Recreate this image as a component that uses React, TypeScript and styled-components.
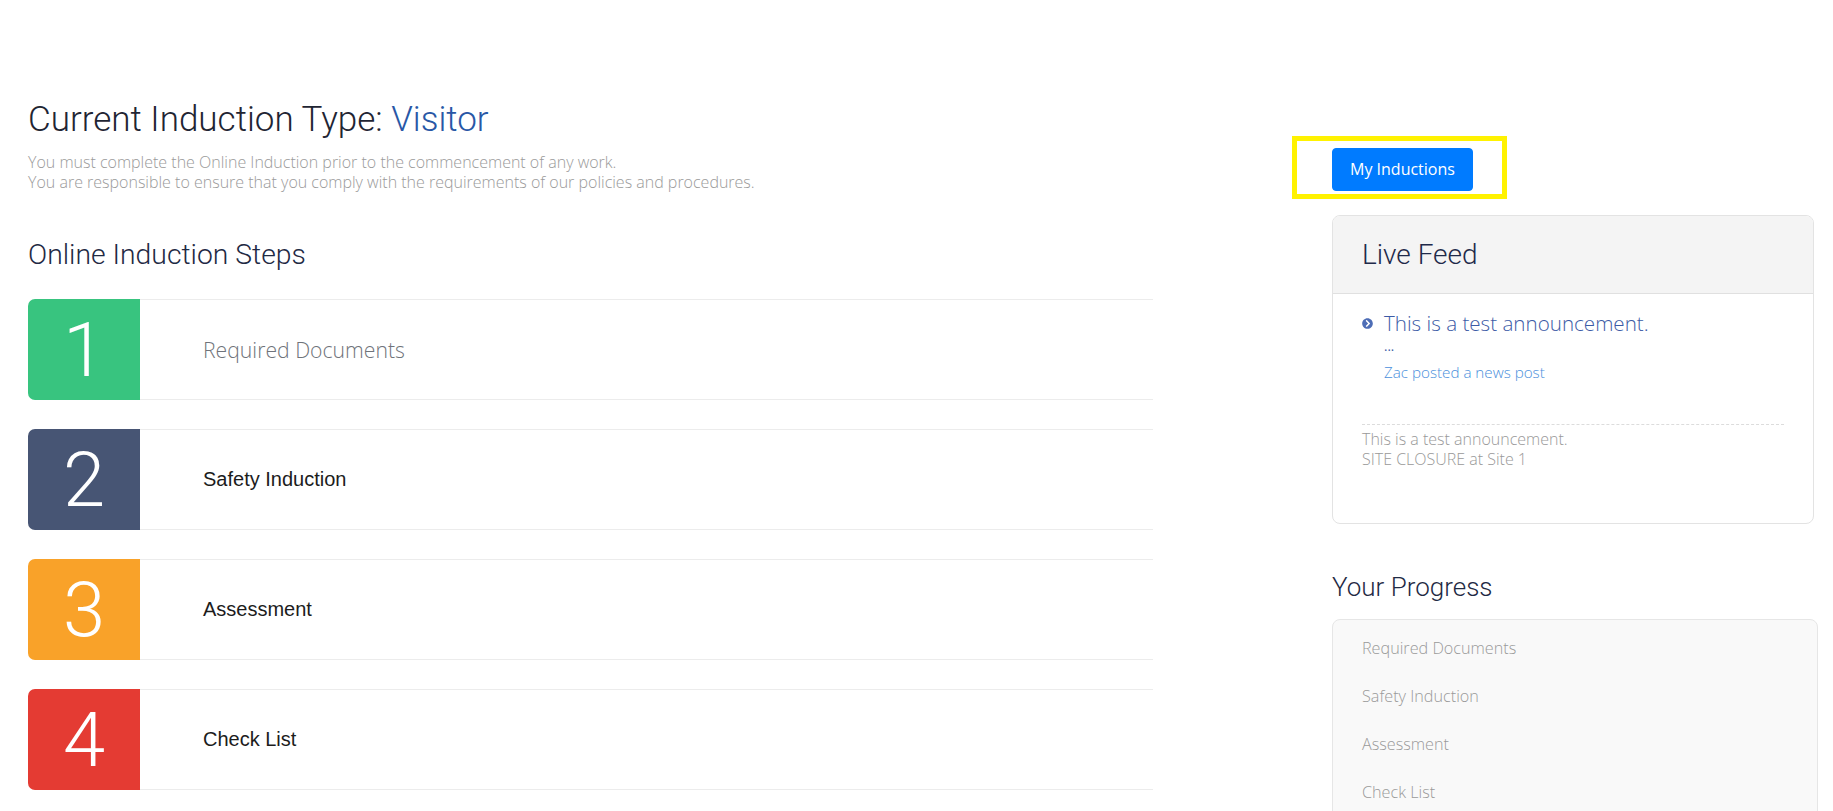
import React from 'react';
import styled, { createGlobalStyle } from 'styled-components';
import { FaChevronCircleRight } from 'react-icons/fa';

const steps = [
  { n: 1, label: 'Required Documents', color: '#38c47f', done: true },
  { n: 2, label: 'Safety Induction', color: '#475574', done: false },
  { n: 3, label: 'Assessment', color: '#f9a229', done: false },
  { n: 4, label: 'Check List', color: '#e43b33', done: false },
];

const InductionPage = () => {
  return (
    <>
      <GlobalStyle />
      <Page>
        <Main>
          <Title>
            Current Induction Type: <Accent>Visitor</Accent>
          </Title>
          <Intro>
            You must complete the Online Induction prior to the commencement of
            any work.
            <br />
            You are responsible to ensure that you comply with the requirements
            of our policies and procedures.
          </Intro>
          <SectionTitle>Online Induction Steps</SectionTitle>
          <StepList>
            {steps.map((s) => (
              <StepRow key={s.n}>
                <StepNumber $color={s.color}>{s.n}</StepNumber>
                <StepLabel $done={s.done}>{s.label}</StepLabel>
              </StepRow>
            ))}
          </StepList>
        </Main>

        <Aside>
          <Highlight>
            <PrimaryButton>My Inductions</PrimaryButton>
          </Highlight>

          <Panel>
            <PanelHeader>Live Feed</PanelHeader>
            <FeedBody>
              <FeedItem>
                <FeedIcon>
                  <FaChevronCircleRight />
                </FeedIcon>
                <div>
                  <FeedTitle>This is a test announcement.</FeedTitle>
                  <FeedDots>...</FeedDots>
                  <FeedMeta>Zac posted a news post</FeedMeta>
                </div>
              </FeedItem>
              <FeedText>
                This is a test announcement.
                <br />
                SITE CLOSURE at Site 1
              </FeedText>
            </FeedBody>
          </Panel>

          <ProgressTitle>Your Progress</ProgressTitle>
          <ProgressPanel>
            {steps.map((s) => (
              <ProgressItem key={s.n}>{s.label}</ProgressItem>
            ))}
          </ProgressPanel>
        </Aside>
      </Page>
    </>
  );
};

const GlobalStyle = createGlobalStyle`
  * {
    box-sizing: border-box;
  }
  body {
    margin: 0;
    background: #fff;
    font-family: 'Open Sans', sans-serif;
    overflow: hidden;
  }
`;

const Page = styled.div`
  display: grid;
  grid-template-columns: 1125px 483px;
  column-gap: 179px;
  padding: 99px 0 0 28px;
  min-height: 100vh;
`;

const Main = styled.main`
  display: flex;
  flex-direction: column;
`;

const Title = styled.h1`
  margin: 0;
  font-family: 'Roboto', sans-serif;
  font-weight: 300;
  font-size: 35px;
  line-height: 42px;
  color: #1f2533;
`;

const Accent = styled.span`
  color: #2857a6;
`;

const Intro = styled.p`
  margin: 11px 0 0;
  font-family: 'Open Sans', sans-serif;
  font-weight: 300;
  font-size: 16px;
  line-height: 20px;
  color: #9a9a9a;
`;

const SectionTitle = styled.h2`
  margin: 47px 0 0;
  font-family: 'Roboto', sans-serif;
  font-weight: 300;
  font-size: 28.3px;
  line-height: 32px;
  color: #1f2a44;
`;

const StepList = styled.div`
  display: flex;
  flex-direction: column;
  gap: 29px;
  margin-top: 28px;
`;

const StepRow = styled.div`
  display: flex;
  align-items: stretch;
  height: 101px;
`;

const StepNumber = styled.div<{ $color: string }>`
  width: 112px;
  flex-shrink: 0;
  display: flex;
  align-items: center;
  justify-content: center;
  background: ${({ $color }) => $color};
  border-radius: 7px 0 0 7px;
  color: #fff;
  font-family: 'Roboto', sans-serif;
  font-weight: 300;
  font-size: 76px;
`;

const StepLabel = styled.div<{ $done: boolean }>`
  flex: 1;
  display: flex;
  align-items: center;
  padding-left: 63px;
  border-top: 1px solid #ececec;
  border-bottom: 1px solid #ececec;
  font-family: ${({ $done }) =>
    $done ? "'Open Sans', sans-serif" : "'Liberation Sans', Arial, sans-serif"};
  font-weight: ${({ $done }) => ($done ? 300 : 400)};
  font-size: ${({ $done }) => ($done ? '21.2px' : '20px')};
  color: ${({ $done }) => ($done ? '#6f737a' : '#1c1c1c')};
`;

const Aside = styled.aside`
  display: flex;
  flex-direction: column;
  align-items: stretch;
  padding-top: 37px;
`;

const Highlight = styled.div`
  align-self: flex-start;
  margin-left: -40px;
  padding: 7px 29px 3px 35px;
  border: 5px solid #fff200;
`;

const PrimaryButton = styled.button`
  display: block;
  padding: 9px 17px;
  border: 1px solid #007bff;
  border-radius: 4px;
  background: #007bff;
  color: #fff;
  font-family: 'Open Sans', sans-serif;
  font-size: 16px;
  line-height: 23px;
  cursor: pointer;
`;

const Panel = styled.section`
  margin-top: 16px;
  width: 482px;
  border: 1px solid #e3e3e3;
  border-radius: 8px;
  overflow: hidden;
  background: #fff;
`;

const PanelHeader = styled.h3`
  margin: 0;
  height: 78px;
  display: flex;
  align-items: center;
  padding-left: 29px;
  background: #f4f4f4;
  border-bottom: 1px solid #e0e0e0;
  font-family: 'Roboto', sans-serif;
  font-weight: 300;
  font-size: 28px;
  color: #1f2a4a;
`;

const FeedBody = styled.div`
  padding: 16px 29px 54px;
`;

const FeedItem = styled.div`
  display: flex;
  gap: 11px;
  padding-bottom: 41px;
  border-bottom: 1px dashed #dcdcdc;
`;

const FeedIcon = styled.span`
  display: flex;
  padding-top: 8px;
  color: #4d6db6;
  font-size: 11px;
`;

const FeedTitle = styled.div`
  font-family: 'Open Sans', sans-serif;
  font-weight: 300;
  font-size: 20.6px;
  line-height: 26px;
  color: #3c5ba6;
`;

const FeedDots = styled.div`
  font-size: 13px;
  line-height: 20px;
  color: #3c5ba6;
`;

const FeedMeta = styled.div`
  margin-top: 5px;
  font-family: 'Open Sans', sans-serif;
  font-weight: 300;
  font-size: 15.2px;
  line-height: 22px;
  color: #4a8fdc;
`;

const FeedText = styled.p`
  margin: 4px 0 0;
  font-family: 'Open Sans', sans-serif;
  font-weight: 300;
  font-size: 16px;
  line-height: 20px;
  color: #999;
`;

const ProgressTitle = styled.h2`
  margin: 48px 0 0;
  font-family: 'Roboto', sans-serif;
  font-weight: 300;
  font-size: 26px;
  line-height: 31px;
  color: #1f2a44;
`;

const ProgressPanel = styled.div`
  margin-top: 16px;
  width: 486px;
  padding: 18px 29px 40px;
  background: #f9f9f9;
  border: 1px solid #e6e6e6;
  border-radius: 8px;
  display: flex;
  flex-direction: column;
  gap: 28px;
`;

const ProgressItem = styled.div`
  font-family: 'Open Sans', sans-serif;
  font-weight: 300;
  font-size: 16.2px;
  line-height: 20px;
  color: #9a9a9a;
`;

export default InductionPage;
